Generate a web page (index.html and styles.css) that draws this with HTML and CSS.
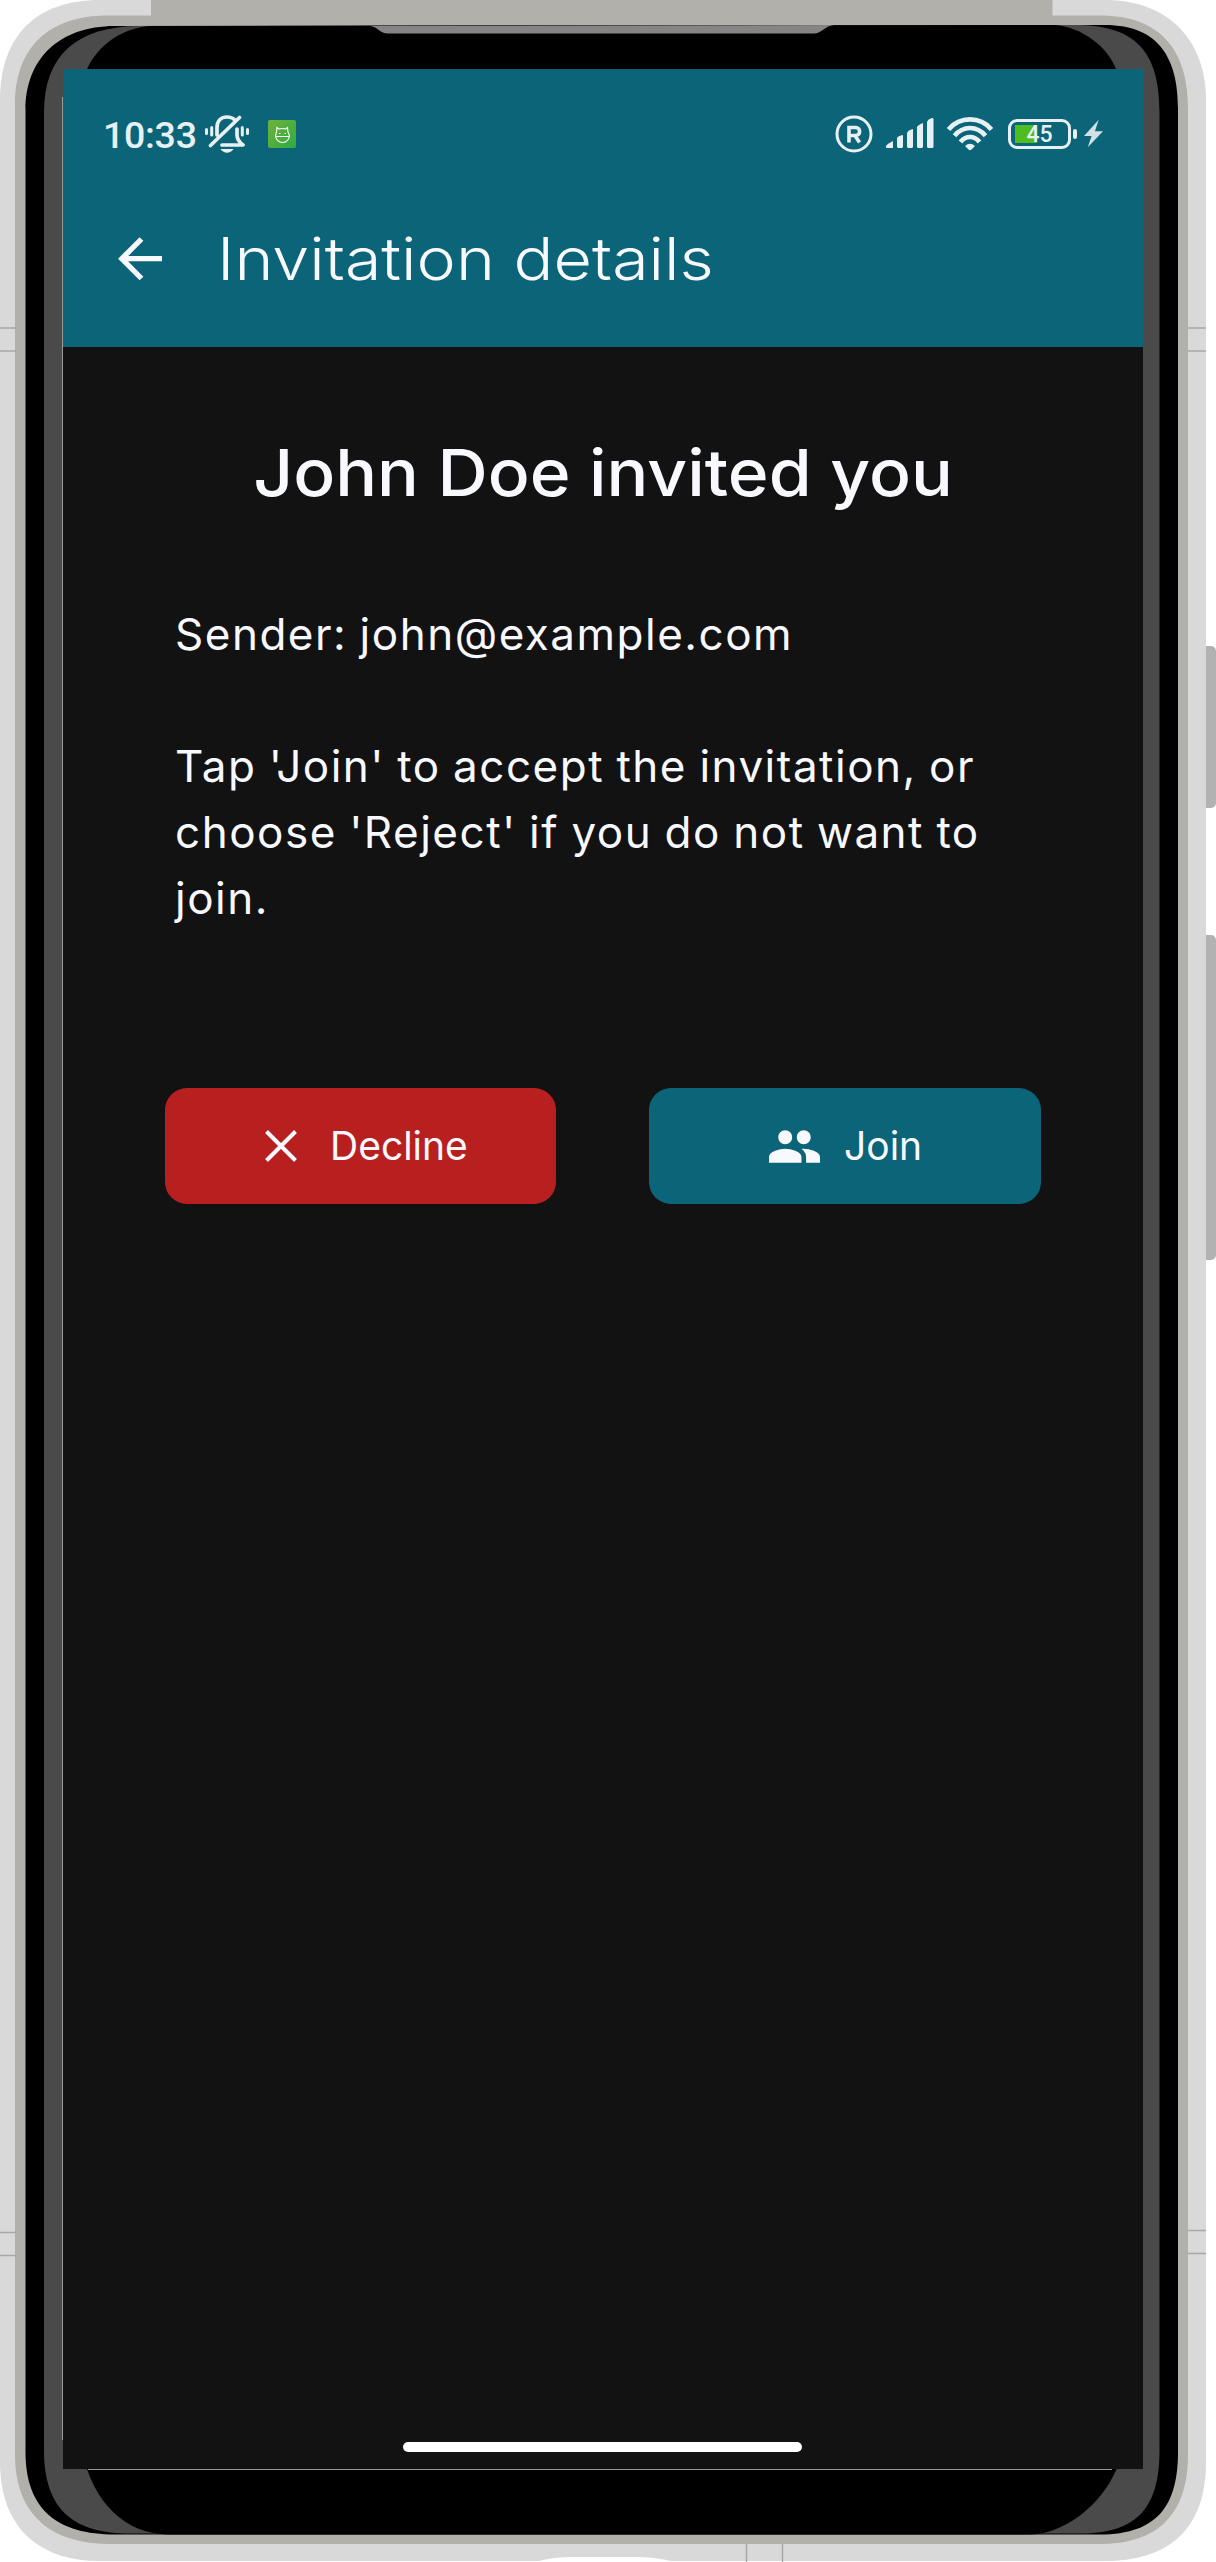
FILE: index.html
```html
<!DOCTYPE html>
<html lang="en">
<head>
<meta charset="utf-8">
<title>Invitation details</title>
<link rel="stylesheet" href="styles.css">
</head>
<body>
<div class="phone">
  <svg class="frame" viewBox="0 0 1216 2562" aria-hidden="true">
    <!-- side keys -->
    <rect x="1200" y="640" width="16" height="168" fill="none"/>
    <rect x="1200" y="646" width="16" height="162" rx="5" fill="#b2b2b2"/>
    <rect x="1200" y="935" width="16" height="325" rx="5" fill="#b2b2b2"/>
    <!-- outer shell -->
    <path fill="#d9d9d9" d="M100 0H1105C1170 0 1206 42 1206 100V2462C1206 2528 1170 2561 1105 2561H100C36 2561 0 2525 0 2462V100C0 36 36 0 100 0Z"/>
    <path fill="#b2b0ab" d="M151 0H1052.500V15.500H1100C1160 15.500 1188 50 1188 107V2455C1188 2512 1160 2544 1100 2544H110C48 2544 15 2512 15 2455V105C15 48 48 15.500 108 15.500H151Z"/>
    <path fill="#000" d="M115 26L1105 25C1160 25 1178 60 1178 108V2452C1178 2505 1158 2534.500 1100 2534.500H115C58 2534.500 25.500 2510 25.500 2452V110C25.500 60 58 26 115 26Z"/>
    <path fill="#4a4a4a" d="M140 26L1075 25C1136 25 1159.500 52 1159.500 112V2450C1159.500 2505 1140 2533.500 1080 2533.500H130C76 2533.500 44 2512 44 2450V112C44 56 76 26 140 26Z"/>
    <path fill="#000" d="M150 26L1055 25C1080 27 1108 45 1117 72L1123 100V2450C1112 2498 1068 2534 1030 2534.500H168C125 2534 92 2502 82 2450V100L87 69C98 45 122 28 150 26Z"/>
    <path fill="#858585" d="M370 26L834 25C824 26 822 33.500 814 33.500H388C380 33.500 378 27 370 26Z"/>
    <path fill="none" stroke="#a8a8a8" stroke-width="1.500" d="M0 328H16M0 351H16M1188 328H1206M1188 351H1206M0 2232.500H16M0 2255.500H16M1188 2230.500H1206M1188 2253.500H1206M746.500 2543V2562M782.500 2543V2562"/>
    <path fill="#fff" d="M535 2562Q553 2557 570 2557H638Q655 2557 675 2562Z"/>
    <path fill="none" stroke="#999" d="M62.500 97V2440M88 2469.500H1112"/>
  </svg>

  <main class="screen">
    <header class="header">
      <div class="status">
        <span class="clock">10:33</span>
        <svg class="bell" viewBox="0 0 44 38" fill="none" stroke="#e7f0f3" stroke-width="3.700" stroke-linecap="round" stroke-linejoin="round">
          <path d="M12 20V13C12 6 16 2 22 2C26 2 28 3 30 5M5.500 30.500L34.500 2.500M32 14V20C32 24 34 27 38 30H17"/>
          <path stroke-width="3" d="M1.500 14.500V18.500M6.700 12.500V20M37.300 12.500V20M42.500 14.500V18.500"/>
          <path fill="#e7f0f3" stroke="none" d="M15.500 34H28.500C25 39 19 39 15.500 34Z"/>
        </svg>
        <svg class="app" viewBox="0 0 28 28">
          <defs><linearGradient id="leaf" x2="1" y2="1"><stop stop-color="#6eb33c"/><stop offset="1" stop-color="#2faa42"/></linearGradient></defs>
          <rect width="28" height="28" rx="2" fill="url(#leaf)"/>
          <path d="M8.500 12L9 7.500L11 9Q14 8 17.500 9L19.500 7.500L20 12L21.500 15.500A7 7 0 0 1 7.500 15.500ZM7.500 16.500H21.500M11 13.500H12.500M16.500 13.500H18" fill="none" stroke="#fff" stroke-width="1.100"/>
        </svg>
        <span class="spacer"></span>
        <svg class="registered" viewBox="0 0 38 38" fill="none" stroke="#e7f0f3">
          <circle cx="19" cy="19" r="17" stroke-width="3"/>
          <path stroke-width="3.600" d="M14 27.500V12.500H20.500C26 12.500 26 20.500 20.500 20.500H14M20 20.500L24.500 27.500"/>
        </svg>
        <svg class="signal" viewBox="0 0 48 31" fill="#e7f0f3">
          <path d="M0 28Q1 26 7 23V30H1Q0 30 0 29ZM11 20Q12 18 17 17V29L16 30H12L11 29ZM21 15Q22 12 27 11V29L26 30H22L21 29ZM31 9Q32 7 37 5V29L36 30H32L31 29ZM41 4Q42 1 46 0Q47.500 0 47.500 1V29L46.500 30H42L41 29Z"/>
        </svg>
        <svg class="wifi" viewBox="0 0 46 34" fill="none" stroke="#e7f0f3" stroke-width="4.700">
          <path d="M1.500 12.500Q10 2.400 23 2.400T44.500 12.500M7.500 18.700Q14 11 23 11T38.500 18.700M13.500 25Q17.500 20 23 20T32.500 25"/>
          <path fill="#e7f0f3" stroke="none" d="M18 29Q23 24.500 28 29L24.500 32.500Q23 34 21.500 32.500Z"/>
        </svg>
        <div class="battery"><span>45</span></div>
        <i class="battery-cap"></i>
        <svg class="bolt" viewBox="0 0 20 29"><path fill="#d0e1e6" d="M15.500 0L0 17H8L4 29L20 12H11.500Z"/></svg>
      </div>
      <div class="toolbar">
        <svg class="back" viewBox="0 0 44 44" fill="none" stroke="#f8f8ff" stroke-width="5.300"><path d="M23.500 2L3.800 21.700L23.500 41.500M4 21.700H44"/></svg>
        <h1 class="title">Invitation details</h1>
      </div>
    </header>
    <section class="content">
      <h2 class="heading">John Doe invited you</h2>
      <p class="sender">Sender: john@example.com</p>
      <p class="message">Tap 'Join' to accept the invitation, or<br>choose 'Reject' if you do not want to<br>join.</p>
      <div class="actions">
        <button class="button decline">
          <svg class="cross" viewBox="0 0 32 32" fill="none" stroke="#f8f8ff" stroke-width="4"><path d="M1.500 1.500L30.500 30.500M30.500 1.500L1.500 30.500"/></svg>
          <span>Decline</span>
        </button>
        <button class="button join">
          <svg class="people" viewBox="1 5 22 14" fill="#f8f8ff"><path d="M16 11c1.660 0 2.990-1.340 2.990-3S17.660 5 16 5s-3 1.340-3 3 1.340 3 3 3zm-8 0c1.660 0 2.990-1.340 2.990-3S9.660 5 8 5 5 6.340 5 8s1.340 3 3 3zm0 2c-2.330 0-7 1.170-7 3.500V19h14v-2.500c0-2.330-4.670-3.500-7-3.500zm8 0c-.290 0-.620.020-.970.050 1.160.840 1.970 1.970 1.970 3.450V19h6v-2.500c0-2.330-4.670-3.500-7-3.500z"/></svg>
          <span>Join</span>
        </button>
      </div>
    </section>
    <div class="home-bar"></div>
  </main>
</div>
</body>
</html>
```
FILE: styles.css
```css
* { box-sizing: border-box; }
body { margin: 0; background: #fff; }
svg { display: block; flex: none; }

.phone { position: relative; width: 1216px; height: 2562px; padding: 69px 73px 93px 63px; overflow: hidden; }
.frame { position: absolute; inset: 0; width: 1216px; height: 2562px; }
.screen { position: relative; display: flex; flex-direction: column; height: 2400px; background: #121212; color: #f8f8ff; font-family: Inter, sans-serif; }

.header { height: 278px; background: #0c6478; }
.status { display: flex; align-items: center; height: 129px; padding: 0 40px 0 40px; color: #e7f0f3; }
.clock { width: 102px; padding-top: 2px; font: 500 37.500px/40px Roboto, sans-serif; letter-spacing: -.3px; }
.bell { width: 44px; height: 38px; }
.app { width: 28px; height: 28px; margin-left: 19px; }
.spacer { flex: 1; }
.registered { width: 38px; height: 38px; }
.signal { width: 48px; height: 31px; margin-left: 13px; }
.wifi { width: 46px; height: 34px; margin-left: 13px; }
.battery { display: flex; align-items: center; justify-content: center; width: 63px; height: 30px; margin-left: 15px; border: 3px solid #e7f0f3; border-radius: 9px; background: linear-gradient(#4fbd20, #4fbd20) 4px 3px / 22px 18px no-repeat; font: 500 23px/24px Roboto, sans-serif; }
.battery span { padding-top: 2px; }
.battery-cap { width: 4px; height: 10px; margin: 0 7px 0 2px; border-radius: 2px; background: #e7f0f3; }
.bolt { width: 19px; height: 29px; }

.toolbar { display: flex; align-items: center; height: 122px; padding-left: 55px; }
.back { width: 44px; height: 44px; }
.title { margin: 0 0 0 55px; font-size: 59px; font-weight: 350; line-height: 72px; white-space: nowrap; transform: scaleX(1.124); transform-origin: left; }

.content { flex: 1; padding: 86px 102px 0 102px; }
.heading { margin: 0; text-align: center; font-size: 65px; font-weight: 500; line-height: 80px; white-space: nowrap; transform: scaleX(1.07); }
.sender, .message { margin: 0; padding-left: 10px; font-size: 44px; font-weight: 400; line-height: 66px; letter-spacing: 1.500px; word-spacing: -1.500px; white-space: nowrap; }
.sender { margin-top: 88px; }
.message { margin-top: 66px; }
.actions { display: flex; justify-content: space-between; margin-top: 157px; }
.button { display: flex; align-items: center; width: 391px; height: 116px; border: 0; border-radius: 22px; color: #f8f8ff; font: 400 39px/48px Inter, sans-serif; }
.decline { padding: 0 0 0 100px; background: #b8201f; }
.join { width: 392px; padding: 0 0 0 120px; background: #0c6478; }
.cross { width: 32px; height: 32px; margin-right: 33px; }
.people { width: 51px; height: 33px; margin-right: 24px; }
.home-bar { width: 399px; height: 10px; margin: 0 0 17px 340px; border-radius: 5px; background: #fff; }
```
